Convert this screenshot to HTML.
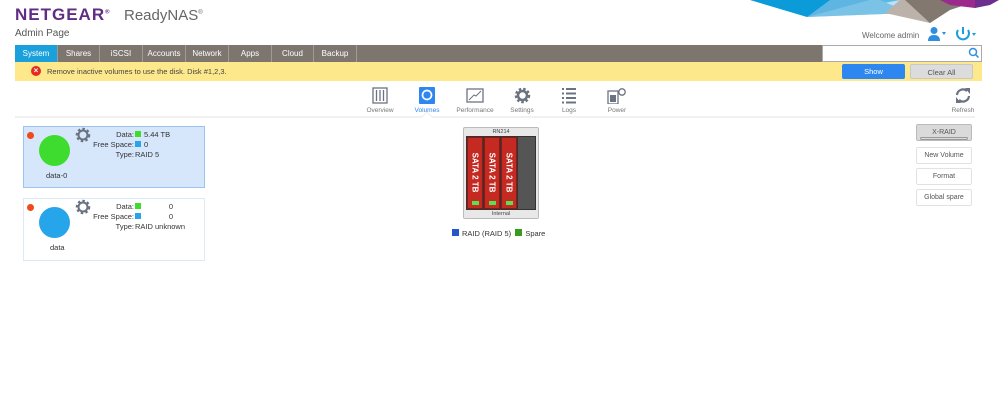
<!DOCTYPE html>
<html><head><meta charset="utf-8"><style>
*{margin:0;padding:0;box-sizing:border-box}
body{width:999px;height:409px;background:#fff;font-family:"Liberation Sans",sans-serif;position:relative;overflow:hidden;color:#444}
.a{position:absolute}
.tab{position:absolute;top:45px;height:17px;color:#fff;font-size:8px;text-align:center;line-height:17px;border-right:1px solid #a09a94}
.ic{position:absolute;top:87px;width:40px;text-align:center;font-size:6.5px;color:#777;line-height:8px}
.btn{position:absolute;left:916px;width:56px;height:17px;border:1px solid #e2e2e2;font-size:7px;text-align:center;line-height:15px;color:#555;border-radius:2px}
.lbl{font-size:7.5px;color:#333}
.sq{display:inline-block;width:6px;height:6px;vertical-align:-0px;margin-right:3px}
.disk{position:absolute;top:9px;width:16px;height:72px;background:#c42a22;border:1px solid #8a1a14}
.disk span{position:absolute;left:-24px;top:30px;width:62px;transform:rotate(90deg);color:#fff;font-size:8px;font-weight:bold;text-align:center}
.disk i{position:absolute;left:4px;bottom:3px;width:7px;height:4px;background:#5be04e}
</style></head><body>
<svg class="a" style="left:740px;top:0" width="259" height="30">
<polygon points="10,0 160,0 67,17" fill="#0a9bd8"/>
<polygon points="90,0 160,0 140,0 170,13 67,17" fill="#5fb5e2"/>
<polygon points="67,17 170,13 160,0 130,0" fill="#8dcdea" opacity=".6"/>
<polygon points="160,0 220,0 190,23 145,13" fill="#bbb2a9"/>
<polygon points="165,0 240,0 210,10 190,23" fill="#827870"/>
<polygon points="200,0 250,0 235,8 210,5" fill="#9c2a8c"/>
<polygon points="235,0 259,0 250,5 235,8" fill="#6d2f8e"/>
</svg>
<div class="a" style="left:15px;top:5px;font-size:17px;font-weight:bold;color:#5f2d83;letter-spacing:1px">NETGEAR<sup style="font-size:6px">®</sup></div>
<div class="a" style="left:124px;top:7px;font-size:15px;color:#666">ReadyNAS<sup style="font-size:6px">®</sup></div>
<div class="a" style="left:15px;top:28px;font-size:10px;color:#555">Admin Page</div>
<div class="a" style="left:862px;top:31px;font-size:8px;color:#666">Welcome admin</div>
<svg class="a" style="left:927px;top:26px" width="60" height="18">
<circle cx="7" cy="4.5" r="3.5" fill="#2e8fe0"/><path d="M1,15 Q1,9 7,9 Q13,9 13,15Z" fill="#2e8fe0"/><path d="M15,6 h4 l-2,3z" fill="#2e8fe0"/>
<path d="M31,4 A6,6 0 1 0 41,4" stroke="#1aa0da" stroke-width="2" fill="none"/><line x1="36" y1="1" x2="36" y2="8" stroke="#1aa0da" stroke-width="2"/><path d="M45,7 h4 l-2,3z" fill="#1aa0da"/>
</svg>
<div class="a" style="left:15px;top:45px;width:807px;height:17px;background:#7d766f"></div>
<div class="tab" style="left:15px;width:43px;background:#1aa0da">System</div>
<div class="tab" style="left:58px;width:42px">Shares</div>
<div class="tab" style="left:100px;width:43px">iSCSI</div>
<div class="tab" style="left:143px;width:43px">Accounts</div>
<div class="tab" style="left:186px;width:43px">Network</div>
<div class="tab" style="left:229px;width:43px">Apps</div>
<div class="tab" style="left:272px;width:42px">Cloud</div>
<div class="tab" style="left:314px;width:43px">Backup</div>
<div class="a" style="left:822px;top:45px;width:160px;height:17px;border:1px solid #aaa;background:#fff"></div>
<svg class="a" style="left:968px;top:47px" width="12" height="12"><circle cx="5" cy="5" r="3.5" stroke="#2e8fe0" stroke-width="1.5" fill="none"/><line x1="7.5" y1="7.5" x2="10.5" y2="10.5" stroke="#2e8fe0" stroke-width="1.5"/></svg>
<div class="a" style="left:15px;top:62px;width:967px;height:19px;background:#fde98b"></div>
<div class="a" style="left:31px;top:66px;width:10px;height:10px;border-radius:50%;background:#e52a1f;color:#fff;font-size:8px;line-height:10px;text-align:center;font-weight:bold">×</div>
<div class="a" style="left:47px;top:67px;font-size:7.5px;color:#444">Remove inactive volumes to use the disk. Disk #1,2,3.</div>
<div class="a" style="left:842px;top:64px;width:63px;height:15px;background:#2e86f0;color:#fff;font-size:7.5px;text-align:center;line-height:15px;border-radius:2px">Show</div>
<div class="a" style="left:910px;top:64px;width:63px;height:15px;background:#dcdcdc;color:#555;font-size:7.5px;text-align:center;line-height:15px;border:1px solid #c8c8c8;border-radius:2px">Clear All</div>
<div class="ic" style="left:360px"><svg width="16" height="17"><rect x="1" y="1" width="14" height="15" fill="none" stroke="#6b7382" stroke-width="1.3"/><path d="M4.5,3v11M8,3v11M11.5,3v11" stroke="#6b7382" stroke-width="1.3"/></svg><br>Overview</div>
<div class="ic" style="left:407px;color:#2e86f0"><svg width="16" height="17"><rect x="0" y="0" width="16" height="17" rx="1" fill="#2e86f0"/><circle cx="8" cy="8" r="4.5" stroke="#fff" stroke-width="1.7" fill="none"/></svg><br>Volumes</div>
<div class="ic" style="left:455px"><svg width="18" height="17"><rect x="1" y="2" width="16" height="13" fill="none" stroke="#6b7382" stroke-width="1.3"/><path d="M3,13 L8,8 L10,9 L15,4" stroke="#6b7382" fill="none"/></svg><br>Performance</div>
<div class="ic" style="left:502px"><svg width="17" height="17"><circle cx="8.5" cy="8.5" r="6" fill="none" stroke="#6b7382" stroke-width="3.5" stroke-dasharray="2.3 1.8"/><circle cx="8.5" cy="8.5" r="4.5" fill="none" stroke="#6b7382" stroke-width="2.5"/></svg><br>Settings</div>
<div class="ic" style="left:549px"><svg width="16" height="17"><path d="M1,2h2M5,2h10M1,6.5h2M5,6.5h10M1,11h2M5,11h10M1,15.5h2M5,15.5h10" stroke="#6b7382" stroke-width="2"/></svg><br>Logs</div>
<div class="ic" style="left:597px"><svg width="20" height="17"><rect x="1" y="4" width="10" height="13" fill="none" stroke="#6b7382" stroke-width="1.3"/><rect x="3" y="8" width="6" height="7" fill="#6b7382"/><circle cx="15" cy="5" r="3.2" fill="none" stroke="#6b7382" stroke-width="1.3"/></svg><br>Power</div>
<div class="ic" style="left:943px"><svg width="16" height="17"><path d="M2,8 A6,6 0 0 1 12,4 M14,9 A6,6 0 0 1 4,13" stroke="#6b7382" stroke-width="2.2" fill="none"/><path d="M10,1 l5,0 0,6z M6,16 l-5,0 0,-6z" fill="#6b7382"/></svg><br>Refresh</div>
<div class="a" style="left:15px;top:116px;width:960px;height:2px;background:#f1f1f1"></div>
<div class="a" style="left:423px;top:113px;width:8px;height:8px;background:#fff;transform:rotate(45deg);border-left:1px solid #eee;border-top:1px solid #eee"></div>

<div class="a" style="left:23px;top:126px;width:182px;height:62px;background:#d6e6fb;border:1px solid #9dc3f3"></div>
<div class="a" style="left:23px;top:198px;width:182px;height:63px;background:#fff;border:1px solid #dde9f7"></div>
<div class="a" style="left:27px;top:132px;width:7px;height:7px;border-radius:50%;background:#ee4a1a"></div>
<div class="a" style="left:27px;top:204px;width:7px;height:7px;border-radius:50%;background:#ee4a1a"></div>
<div class="a" style="left:39px;top:135px;width:31px;height:31px;border-radius:50%;background:#3ddc2e"></div>
<div class="a" style="left:39px;top:207px;width:31px;height:31px;border-radius:50%;background:#27a5ea"></div>
<svg class="a" style="left:75px;top:127px" width="16" height="16"><circle cx="8" cy="8" r="5.5" fill="none" stroke="#6b7382" stroke-width="3.5" stroke-dasharray="2.2 2"/><circle cx="8" cy="8" r="4.5" fill="none" stroke="#6b7382" stroke-width="2"/></svg>
<svg class="a" style="left:75px;top:199px" width="16" height="16"><circle cx="8" cy="8" r="5.5" fill="none" stroke="#6b7382" stroke-width="3.5" stroke-dasharray="2.2 2"/><circle cx="8" cy="8" r="4.5" fill="none" stroke="#6b7382" stroke-width="2"/></svg>
<div class="a lbl" style="left:46px;top:171px">data-0</div>
<div class="a lbl" style="left:50px;top:243px">data</div>
<div class="a lbl" style="left:80px;top:130px;width:54px;text-align:right;line-height:10px">Data:<br>Free Space:<br>Type:</div>
<div class="a lbl" style="left:135px;top:130px;line-height:10px"><span class="sq" style="background:#3ddc2e"></span>5.44 TB<br><span class="sq" style="background:#27a5ea"></span>0<br>RAID 5</div>
<div class="a lbl" style="left:80px;top:202px;width:54px;text-align:right;line-height:10px">Data:<br>Free Space:<br>Type:</div>
<div class="a lbl" style="left:135px;top:202px;line-height:10px;width:60px"><span class="sq" style="background:#3ddc2e"></span><span style="float:right;margin-right:22px">0</span><br><span class="sq" style="background:#27a5ea"></span><span style="float:right;margin-right:22px">0</span><br>RAID unknown</div>

<div class="a" style="left:463px;top:127px;width:76px;height:92px;background:#e8e8e8;border:1px solid #bbb;border-radius:2px">
<div style="font-size:5.5px;text-align:center;color:#444;margin-top:1px">RN214</div>
<div class="a" style="left:2px;top:8px;width:70px;height:74px;background:#333"></div>
<div class="disk" style="left:3px"><span>SATA 2 TB</span><i></i></div>
<div class="disk" style="left:20px"><span>SATA 2 TB</span><i></i></div>
<div class="disk" style="left:37px"><span>SATA 2 TB</span><i></i></div>
<div class="a" style="left:54px;top:9px;width:17px;height:72px;background:#555"></div>
<div class="a" style="left:0;top:83px;width:74px;height:7px;font-size:5.5px;line-height:7px;text-align:center;color:#444;background:#e8e8e8">Internal</div>
</div>
<div class="a lbl" style="left:452px;top:229px"><span class="sq" style="background:#2458c8;width:7px;height:7px"></span>RAID (RAID 5) &nbsp;<span class="sq" style="background:#3a9a1e;width:7px;height:7px"></span>Spare</div>

<div class="btn" style="top:124px;background:#dadada;border-color:#bbb">X-RAID<div style="margin:-3px 3px 0;height:3px;border:1px solid #999;border-radius:2px"></div></div>
<div class="btn" style="top:147px">New Volume</div>
<div class="btn" style="top:168px">Format</div>
<div class="btn" style="top:189px">Global spare</div>
</body></html>
